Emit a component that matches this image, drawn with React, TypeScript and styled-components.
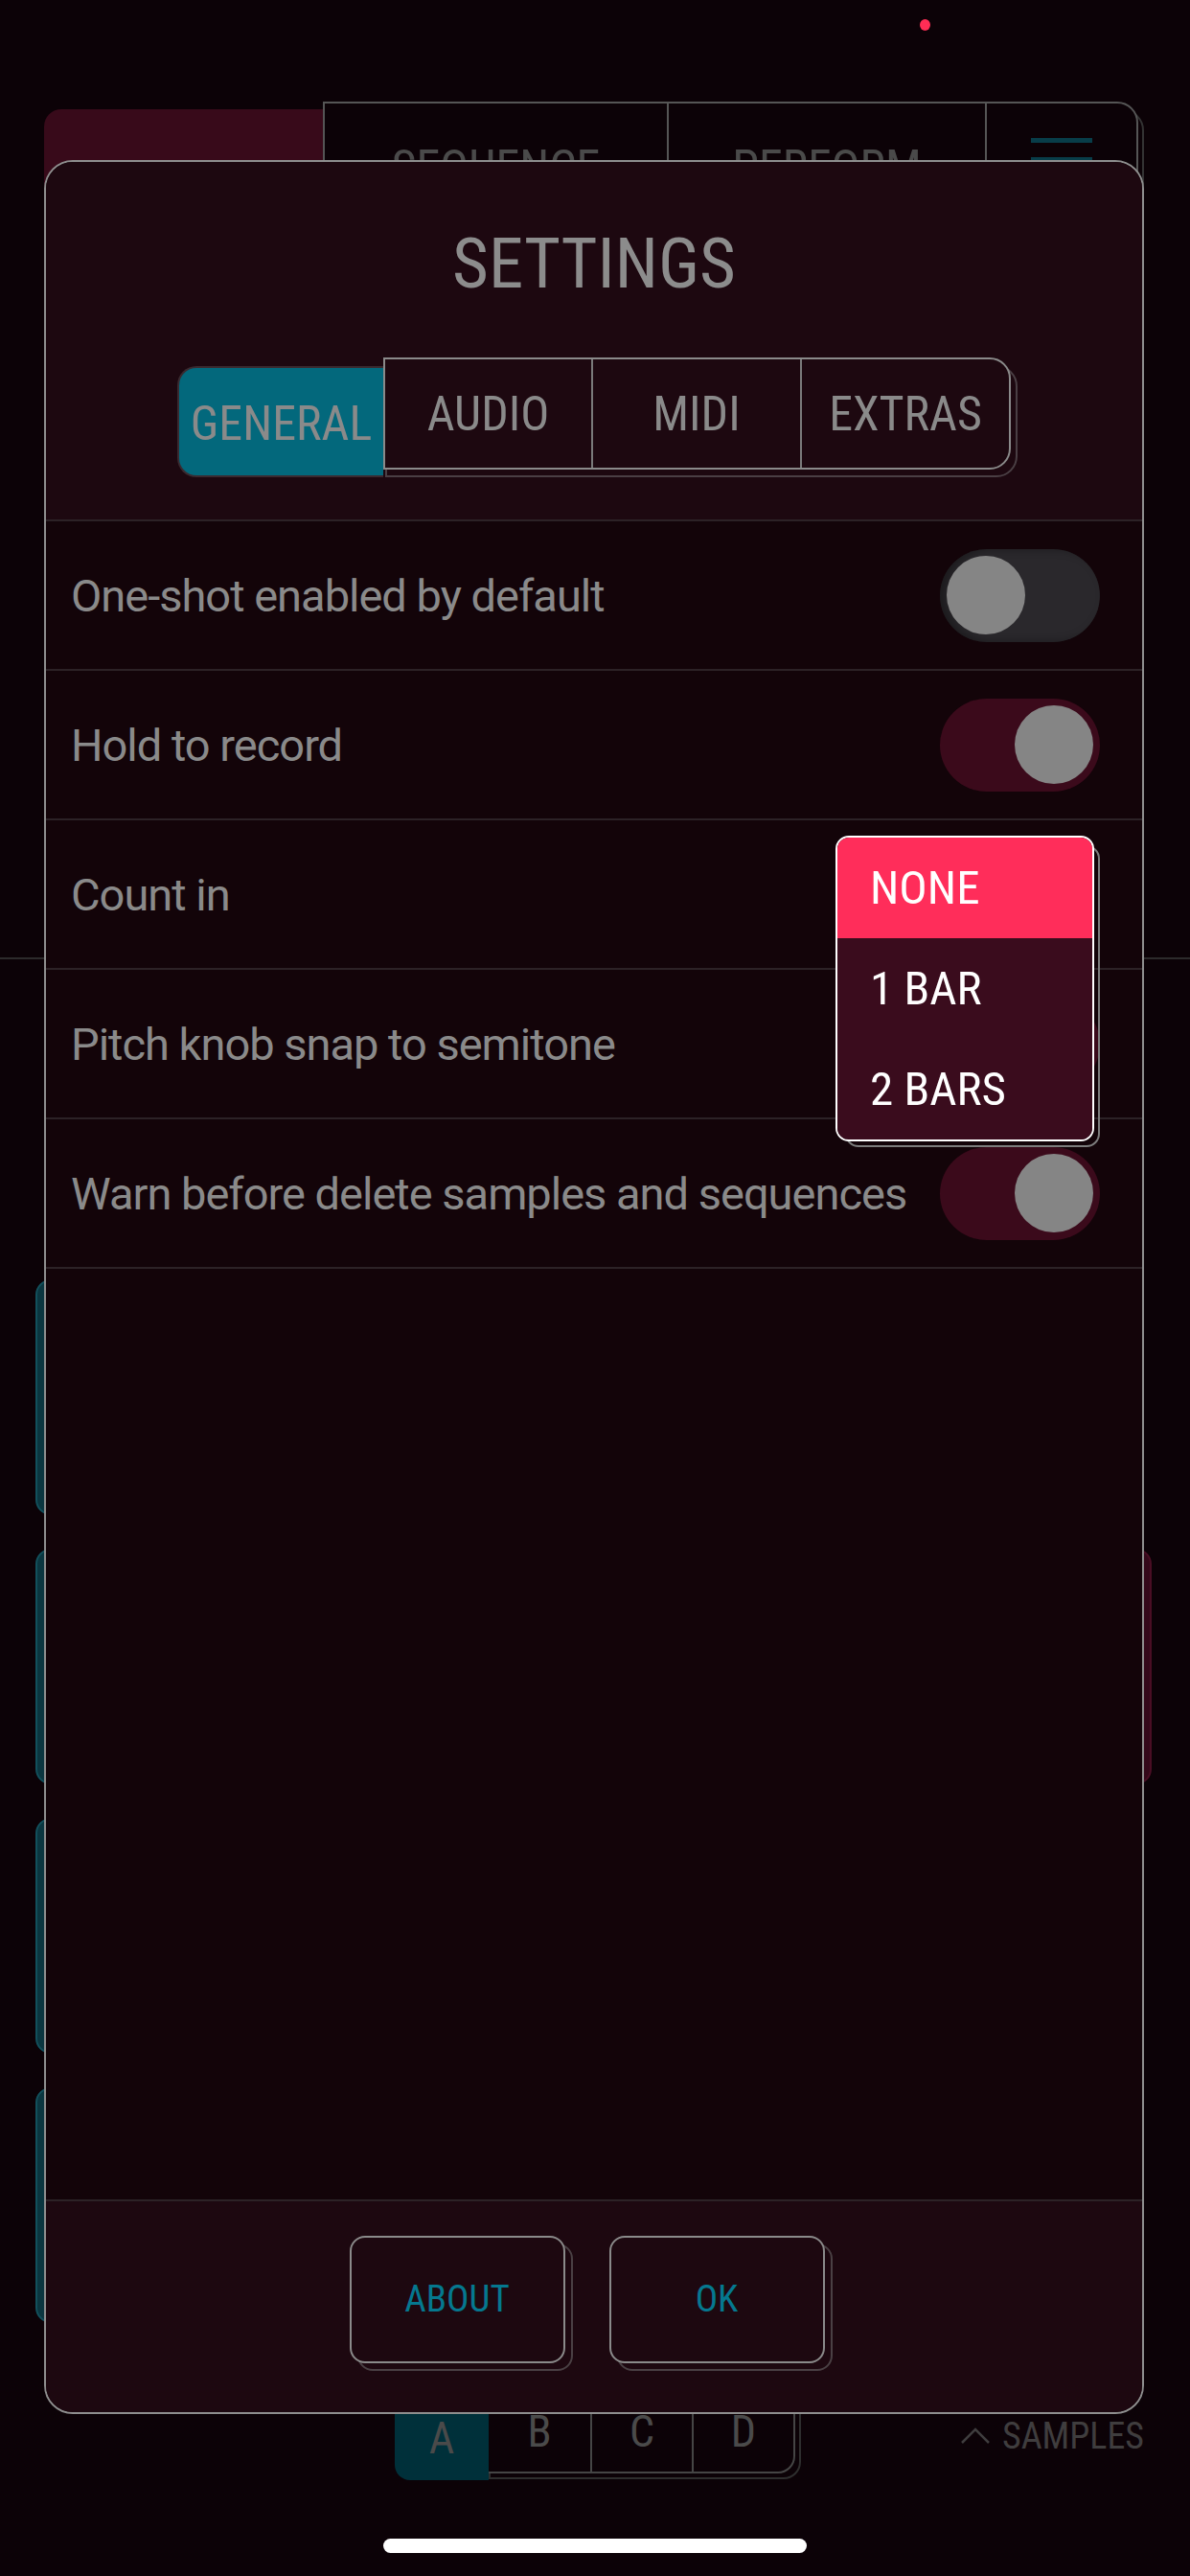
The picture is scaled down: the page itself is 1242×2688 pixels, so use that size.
import React from "react";
import styled, { createGlobalStyle, css } from "styled-components";

const FONT = `Roboto, "Open Sans", "DejaVu Sans", sans-serif`;

const Global = createGlobalStyle`
  html, body { margin: 0; padding: 0; background: #0c0207; overflow: hidden; }
  body { font-family: ${FONT}; }
  * { box-sizing: border-box; }
`;

const condensed = css`
  font-family: ${FONT};
  font-stretch: 75%;
  font-weight: 400;
  line-height: 1;
`;

const Screen = styled.div`
  position: relative;
  width: 1242px;
  height: 2688px;
  overflow: hidden;
  background: #0c0207;
  display: flex;
  flex-direction: column;
  font-family: ${FONT};
`;

/* ---------- background app (dimmed) ---------- */

const StatusBar = styled.div`
  height: 106px;
  display: flex;
  padding: 20px 0 0 960px;
`;

const RecDot = styled.div`
  width: 11px;
  height: 12px;
  border-radius: 50%;
  background: #ff2d55;
`;

const TopTabs = styled.div`
  display: flex;
  margin-left: 46px;
  height: 126px;
  isolation: isolate;
`;

const ActiveTopTab = styled.div`
  ${condensed};
  width: 291px;
  margin-top: 8px;
  background: #380a1a;
  border-radius: 18px 0 0 18px;
  display: flex;
  justify-content: center;
  padding-top: 48px;
  font-size: 50px;
  color: #4a3a40;
`;

const TopFrame = styled.div`
  position: relative;
  display: flex;
  border: 2px solid #555;
  border-radius: 0 22px 22px 0;
  background: #0c0207;
  &::after {
    content: "";
    position: absolute;
    left: 6px;
    top: 6px;
    right: -8px;
    bottom: -8px;
    border: 2px solid #333;
    border-radius: 0 22px 22px 0;
    z-index: -1;
  }
`;

const TopCell = styled.div<{ $w: number }>`
  ${condensed};
  width: ${(p) => p.$w}px;
  display: flex;
  justify-content: center;
  padding-top: 42px;
  font-size: 50px;
  color: #4a4a4a;
  & + & {
    border-left: 2px solid #555;
  }
`;

const MenuCell = styled(TopCell)`
  padding-top: 36px;
`;

const Burger = styled.div`
  display: flex;
  flex-direction: column;
  gap: 15px;
  span {
    display: block;
    width: 64px;
    height: 5px;
    background: #083d49;
  }
`;

const Divider = styled.div`
  margin-top: 767px;
  height: 2px;
  background: #2c2a2b;
`;

const PadGrid = styled.div`
  margin-top: 334px;
  padding: 0 40px 0 37px;
  display: grid;
  grid-template-columns: 1fr 1fr;
  grid-auto-rows: 246px;
  column-gap: 24px;
  row-gap: 35px;
`;

const Pad = styled.div<{ $tone: "teal" | "maroon" | "none" }>`
  border-radius: 16px;
  background: ${(p) =>
    p.$tone === "teal" ? "#0b3640" : p.$tone === "maroon" ? "#34091a" : "transparent"};
  border: 2px solid
    ${(p) => (p.$tone === "teal" ? "#12505c" : p.$tone === "maroon" ? "#4a0e24" : "transparent")};
`;

const BottomBar = styled.div`
  margin-top: 68px;
  height: 97px;
  display: grid;
  grid-template-columns: 1fr auto 1fr;
  align-items: start;
`;

const LetterTabs = styled.div`
  grid-column: 2;
  display: flex;
  isolation: isolate;
`;

const LetterActive = styled.div`
  ${condensed};
  width: 98px;
  height: 88px;
  margin-top: 8px;
  background: #00303a;
  border-radius: 16px 0 0 16px;
  display: flex;
  justify-content: center;
  align-items: center;
  font-size: 46px;
  color: #4a4a4a;
`;

const LetterFrame = styled.div`
  position: relative;
  display: flex;
  height: 89px;
  border: 2px solid #454545;
  border-left: none;
  border-radius: 0 18px 18px 0;
  background: #0c0207;
  &::after {
    content: "";
    position: absolute;
    left: 0;
    top: 6px;
    right: -8px;
    bottom: -8px;
    border: 2px solid #2e2e2e;
    border-radius: 0 18px 18px 0;
    z-index: -1;
  }
`;

const LetterCell = styled.div`
  ${condensed};
  width: 106px;
  display: flex;
  justify-content: center;
  align-items: center;
  font-size: 46px;
  color: #4a4a4a;
  & + & {
    border-left: 2px solid #454545;
  }
`;

const SamplesLink = styled.div`
  ${condensed};
  grid-column: 3;
  justify-self: end;
  margin-right: 48px;
  margin-top: 31px;
  display: flex;
  align-items: center;
  gap: 12px;
  font-size: 38px;
  color: #3f3d3e;
`;

const HomeIndicator = styled.div`
  align-self: center;
  margin-top: 60px;
  width: 442px;
  height: 15px;
  border-radius: 8px;
  background: #ffffff;
`;

/* ---------- settings modal ---------- */

const Modal = styled.div`
  position: absolute;
  left: 46px;
  top: 167px;
  width: 1148px;
  height: 2352px;
  border: 2px solid #8e8e8e;
  border-radius: 30px;
  overflow: hidden;
  background: #130409;
  display: flex;
  flex-direction: column;
  z-index: 10;
`;

const Header = styled.div`
  background: #1d0810;
  border-bottom: 2px solid #2c2226;
  padding: 66px 0 44px;
  display: flex;
  flex-direction: column;
  align-items: center;
`;

const Title = styled.h1`
  ${condensed};
  margin: 0;
  font-size: 73px;
  line-height: 80px;
  color: #8c8c8c;
`;

const TabGroup = styled.div`
  margin-top: 58px;
  height: 125px;
  display: flex;
  isolation: isolate;
`;

const ActiveTab = styled.div`
  ${condensed};
  width: 215px;
  height: 116px;
  margin-top: 9px;
  background: #03687c;
  border: 2px solid #3a2a30;
  border-right: none;
  border-radius: 20px 0 0 20px;
  display: flex;
  align-items: center;
  justify-content: center;
  padding-top: 4px;
  font-size: 50px;
  color: #8a8a8a;
`;

const TabFrame = styled.div`
  position: relative;
  height: 117px;
  display: flex;
  border: 2px solid #8a8a8a;
  border-radius: 0 22px 22px 0;
  background: #1d0810;
  &::after {
    content: "";
    position: absolute;
    left: 0;
    top: 6px;
    right: -9px;
    bottom: -10px;
    border: 2px solid #4a3f44;
    border-radius: 0 22px 22px 0;
    z-index: -1;
  }
`;

const Tab = styled.div<{ $w: number }>`
  ${condensed};
  width: ${(p) => p.$w}px;
  display: flex;
  align-items: center;
  justify-content: center;
  font-size: 50px;
  color: #8a8a8a;
  & + & {
    border-left: 2px solid #7a7a7a;
  }
`;

const List = styled.div`
  flex: 1;
  display: flex;
  flex-direction: column;
`;

const Row = styled.div`
  position: relative;
  height: 156px;
  flex-shrink: 0;
  border-bottom: 2px solid #2c2226;
  display: flex;
  align-items: center;
  justify-content: space-between;
  padding: 0 44px 0 26px;
`;

const Label = styled.span`
  font-family: ${FONT};
  font-size: 47px;
  letter-spacing: -1px;
  line-height: 1;
  white-space: nowrap;
  color: #8a8a8a;
`;

const Track = styled.div<{ $on: boolean }>`
  width: 167px;
  height: 97px;
  flex-shrink: 0;
  border-radius: 49px;
  padding: 0 7px;
  display: flex;
  align-items: center;
  justify-content: ${(p) => (p.$on ? "flex-end" : "flex-start")};
  background: ${(p) => (p.$on ? "#3b0a1b" : "#2a282c")};
  box-shadow: ${(p) => (p.$on ? "none" : "inset 6px 0 10px rgba(0,0,0,0.35)")};
`;

const Knob = styled.div`
  width: 82px;
  height: 82px;
  border-radius: 50%;
  background: #858585;
`;

const Menu = styled.div`
  position: absolute;
  top: 16px;
  right: 50px;
  z-index: 5;
`;

const MenuBox = styled.div`
  position: relative;
  width: 270px;
  border: 2px solid #ffffff;
  border-radius: 14px;
  &::after {
    content: "";
    position: absolute;
    left: 8px;
    top: 8px;
    right: -8px;
    bottom: -8px;
    border: 2px solid #7c7c7c;
    border-radius: 14px;
    z-index: -1;
  }
`;

const MenuItem = styled.div<{ $selected?: boolean }>`
  ${condensed};
  height: 105px;
  display: flex;
  align-items: center;
  padding-left: 34px;
  font-size: 49px;
  color: #ffffff;
  background: ${(p) => (p.$selected ? "#ff2d5a" : "#3a0c1d")};
  &:first-child {
    border-radius: 12px 12px 0 0;
  }
  &:last-child {
    border-radius: 0 0 12px 12px;
  }
`;

const Footer = styled.div`
  background: #1d0810;
  border-top: 2px solid #2c2226;
  height: 222px;
  flex-shrink: 0;
  padding: 36px 15px 0 0;
  display: flex;
  justify-content: center;
  align-items: flex-start;
  gap: 46px;
  isolation: isolate;
`;

const FooterButton = styled.button`
  ${condensed};
  position: relative;
  width: 225px;
  height: 133px;
  border: 2px solid #8a8a8a;
  border-radius: 16px;
  background: #1d0810;
  font-size: 39px;
  color: #05788f;
  padding: 0;
  &::after {
    content: "";
    position: absolute;
    left: 6px;
    top: 6px;
    right: -10px;
    bottom: -10px;
    border: 2px solid #4a4044;
    border-radius: 16px;
    z-index: -1;
  }
`;

const settings: { label: string; on?: boolean; menu?: boolean }[] = [
  { label: "One-shot enabled by default", on: false },
  { label: "Hold to record", on: true },
  { label: "Count in", menu: true },
  { label: "Pitch knob snap to semitone", on: true },
  { label: "Warn before delete samples and sequences", on: true },
];

export default function App() {
  return (
    <>
      <Global />
      <Screen>
        <StatusBar>
          <RecDot />
        </StatusBar>
        <TopTabs>
          <ActiveTopTab>SAMPLE</ActiveTopTab>
          <TopFrame>
            <TopCell $w={357}>SEQUENCE</TopCell>
            <TopCell $w={332}>PERFORM</TopCell>
            <MenuCell $w={158}>
              <Burger>
                <span />
                <span />
                <span />
              </Burger>
            </MenuCell>
          </TopFrame>
        </TopTabs>
        <Divider />
        <PadGrid>
          <Pad $tone="teal" />
          <Pad $tone="none" />
          <Pad $tone="teal" />
          <Pad $tone="maroon" />
          <Pad $tone="teal" />
          <Pad $tone="none" />
          <Pad $tone="teal" />
          <Pad $tone="none" />
        </PadGrid>
        <BottomBar>
          <LetterTabs>
            <LetterActive>A</LetterActive>
            <LetterFrame>
              <LetterCell>B</LetterCell>
              <LetterCell>C</LetterCell>
              <LetterCell>D</LetterCell>
            </LetterFrame>
          </LetterTabs>
          <SamplesLink>
            <svg width="32" height="18" viewBox="0 0 32 18" fill="none">
              <path d="M2 16 L16 2 L30 16" stroke="#3f3d3e" strokeWidth="2.5" />
            </svg>
            SAMPLES
          </SamplesLink>
        </BottomBar>
        <HomeIndicator />

        <Modal>
          <Header>
            <Title>SETTINGS</Title>
            <TabGroup>
              <ActiveTab>GENERAL</ActiveTab>
              <TabFrame>
                <Tab $w={215}>AUDIO</Tab>
                <Tab $w={218}>MIDI</Tab>
                <Tab $w={218}>EXTRAS</Tab>
              </TabFrame>
            </TabGroup>
          </Header>
          <List>
            {settings.map((s) => (
              <Row key={s.label}>
                <Label>{s.label}</Label>
                {s.menu ? (
                  <Menu>
                    <MenuBox>
                      <MenuItem $selected>NONE</MenuItem>
                      <MenuItem>1 BAR</MenuItem>
                      <MenuItem>2 BARS</MenuItem>
                    </MenuBox>
                  </Menu>
                ) : (
                  <Track $on={!!s.on}>
                    <Knob />
                  </Track>
                )}
              </Row>
            ))}
          </List>
          <Footer>
            <FooterButton>ABOUT</FooterButton>
            <FooterButton>OK</FooterButton>
          </Footer>
        </Modal>
      </Screen>
    </>
  );
}
